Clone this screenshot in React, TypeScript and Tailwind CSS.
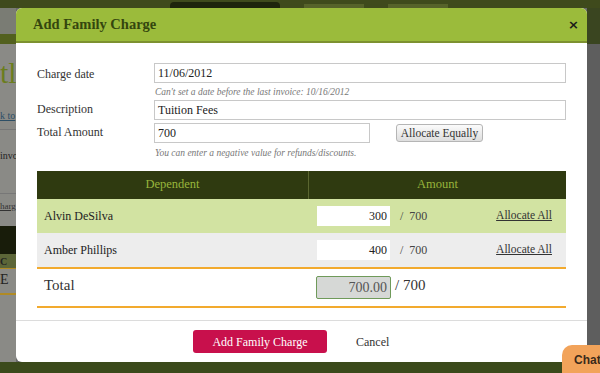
import React from "react";

const serif = { fontFamily: '"Liberation Serif", "DejaVu Serif", serif' };

const rows = [
  { name: "Alvin DeSilva", amount: "300", bg: "bg-[#d2e3a2]" },
  { name: "Amber Phillips", amount: "400", bg: "bg-[#ededed]" },
];

function Backdrop() {
  return (
    <div className="flex h-full w-full flex-col bg-[#6a6a6a]">
      <div className="flex h-[8px] items-end gap-6 bg-[#3f4a1c] pl-[170px]">
        <div className="h-[6px] w-[110px] rounded-t bg-[#1e240c]" />
        <div className="h-[4px] w-[60px] bg-[#56622a]" />
        <div className="h-[4px] w-[60px] bg-[#56622a]" />
      </div>
      <div className="flex flex-1">
        <div className="flex w-[16px] flex-col bg-[#8a8a86]">
          <div className="h-[26px] bg-[#7a7c74]" />
          <div className="h-[10px] bg-[#52601e]" />
          <div className="mt-[14px] text-[30px] leading-none text-[#6b7d1e]" style={serif}>tl</div>
          <div className="mt-[20px] text-[10px] text-[#2d4f66] underline" style={serif}>k to</div>
          <div className="mt-[6px] h-px bg-[#777]" />
          <div className="mt-[18px] text-[10px] text-[#222]" style={serif}>invo</div>
          <div className="mt-[30px] h-px bg-[#777]" />
          <div className="mt-[6px] text-[9px] text-[#333] underline" style={serif}>harg</div>
          <div className="mt-[12px] h-[28px] bg-[#181c0a]" />
          <div className="h-[14px] bg-[#5c6638] text-[10px] font-bold text-[#222]" style={serif}>C</div>
          <div className="h-px bg-[#b08a24]" />
          <div className="h-[24px] text-[14px] text-[#222]" style={serif}>E</div>
          <div className="h-[2px] bg-[#b08a24]" />
        </div>
        <div className="flex-1" />
        <div className="flex w-[13px] flex-col">
          <div className="h-[36px] bg-[#3a4520]" />
          <div className="flex-1 bg-[#5e5e5e]" />
        </div>
      </div>
      <div className="h-[11px] bg-[#3b4a1b]" />
    </div>
  );
}

export default function App() {
  return (
    <div className="relative h-[373px] w-[600px] overflow-hidden" style={serif}>
      <Backdrop />

      <div className="absolute left-[16px] top-[8px] flex h-[354px] w-[571px] flex-col overflow-hidden rounded-[6px] bg-white">
        <div className="flex h-[35px] shrink-0 items-center justify-between border-b-[2px] border-[#7d9130] bg-[#9bbb3b] pl-[17px] pr-[8px]">
          <h2 className="text-[14.5px] font-bold text-[#34460e]">Add Family Charge</h2>
          <span className="text-[13px] font-bold text-[#1a1a1a]" style={{ fontFamily: '"DejaVu Sans", sans-serif' }}>×</span>
        </div>

        <div className="flex flex-1 flex-col px-[21px] pt-[20px]">
          <div className="flex">
            <div className="w-[117px] pt-[2px] text-[12px] text-[#333]">Charge date</div>
            <div className="flex flex-1 flex-col">
              <div className="flex h-[20px] items-center border border-[#c8c8c8] px-[3px] text-[12px] text-[#222]">11/06/2012</div>
              <div className="mt-[2px] pl-[1px] text-[9.5px] italic text-[#777]">Can't set a date before the last invoice: 10/16/2012</div>
            </div>
          </div>
          <div className="mt-[1px] flex">
            <div className="w-[117px] text-[12px] text-[#333]">Description</div>
            <div className="flex h-[20px] flex-1 items-center border border-[#c8c8c8] px-[3px] text-[12px] text-[#222]">Tuition Fees</div>
          </div>
          <div className="mt-[3px] flex">
            <div className="w-[117px] text-[12px] text-[#333]">Total Amount</div>
            <div className="flex flex-1 flex-col">
              <div className="flex items-center">
                <div className="flex h-[20px] w-[216px] items-center border border-[#c8c8c8] px-[3px] text-[12px] text-[#222]">700</div>
                <button className="ml-[26px] flex h-[18px] w-[87px] items-center justify-center rounded-[3px] border border-[#b5b5b5] bg-gradient-to-b from-[#fbfbfb] to-[#dedede] text-[11.5px] text-[#333]">
                  Allocate Equally
                </button>
              </div>
              <div className="mt-[3px] pl-[1px] text-[9.5px] italic text-[#777]">You can enter a negative value for refunds/discounts.</div>
            </div>
          </div>

          <div className="mt-[10px] flex flex-col">
            <div className="flex h-[28px] bg-[#2f3a10] text-[12.5px] text-[#98b53c]">
              <div className="flex w-[272px] items-center justify-center border-r border-[#5a6630]">Dependent</div>
              <div className="flex flex-1 items-center justify-center">Amount</div>
            </div>
            {rows.map((r) => (
              <div key={r.name} className={`flex h-[34px] items-center ${r.bg}`}>
                <div className="w-[272px] pl-[7px] text-[12px] text-[#222]">{r.name}</div>
                <div className="flex flex-1 items-center pl-[8px] pr-[14px]">
                  <div className="flex h-[20px] w-[73px] items-center justify-end bg-white px-[3px] text-[12px] text-[#222]">{r.amount}</div>
                  <span className="ml-[10px] text-[12px] text-[#444]">/&nbsp;&nbsp;700</span>
                  <a className="ml-auto text-[11.5px] text-[#333] underline">Allocate All</a>
                </div>
              </div>
            ))}
            <div className="h-[2px] bg-[#f2aa2e]" />
            <div className="flex h-[37px] items-center">
              <div className="w-[272px] pl-[7px] pb-[3px] text-[15px] text-[#333]">Total</div>
              <div className="flex items-center pl-[7px]">
                <div className="flex h-[23px] w-[75px] items-center justify-end rounded-[2px] border border-[#6f9a5a] bg-[#d6d8d6] px-[3px] text-[14px] text-[#555]">700.00</div>
                <span className="ml-[4px] pb-[3px] text-[15px] text-[#333]">/ 700</span>
              </div>
            </div>
            <div className="h-[2px] bg-[#f2aa2e]" />
          </div>
        </div>

        <div className="flex h-[42px] shrink-0 items-center border-t border-[#dcdcdc] pl-[177px]">
          <button className="flex h-[23px] w-[134px] items-center justify-center rounded-[3px] bg-[#c8104c] text-[12px] text-white">
            Add Family Charge
          </button>
          <span className="ml-[29px] text-[12px] text-[#333]">Cancel</span>
        </div>
      </div>

      <div
        className="absolute bottom-0 right-0 flex h-[28px] w-[38px] items-start rounded-tl-[10px] bg-[#f2a35a] pl-[12px] pt-[6px] text-[12px] font-bold text-[#3b2a1a]"
        style={{ fontFamily: '"Liberation Sans", Arial, sans-serif' }}
      >
        Chat
      </div>
    </div>
  );
}
